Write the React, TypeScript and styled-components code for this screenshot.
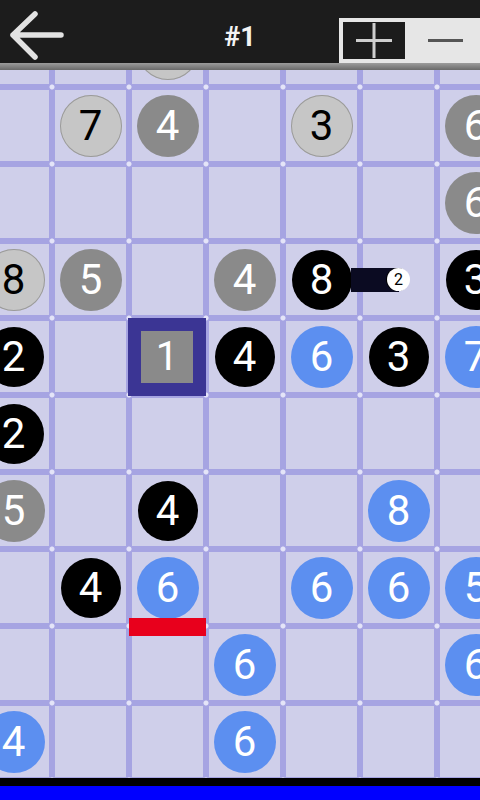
import styled, { createGlobalStyle } from "styled-components";

type Kind = "light" | "gray" | "black" | "blue";

const colors = {
  header: "#1c1c1c",
  cell: "#cfcfea",
  line: "#a6a4e2",
  dot: "#e4e4f8",
  light: "#c6c6c6",
  gray: "#8a8a8a",
  black: "#000000",
  blue: "#5c8ff0",
  selected: "#3b3594",
  marker: "#e8001c",
};

const GlobalStyle = createGlobalStyle`
  html, body {
    margin: 0;
    padding: 0;
    background: #000;
  }
  body {
    font-family: Roboto, "Noto Sans", sans-serif;
    overflow: hidden;
  }
`;

const Screen = styled.div`
  width: 480px;
  height: 800px;
  display: flex;
  flex-direction: column;
  overflow: hidden;
`;

const Header = styled.header`
  height: 63px;
  flex-shrink: 0;
  background: ${colors.header};
  display: grid;
  grid-template-columns: 1fr auto 1fr;
  align-items: center;
`;

const BackButton = styled.button`
  justify-self: start;
  align-self: stretch;
  background: none;
  border: 0;
  padding: 0;
  display: flex;
`;

const Title = styled.h1`
  margin: 0;
  padding-top: 11px;
  font-size: 27px;
  line-height: 1;
  font-weight: 700;
  color: #f4f4f4;
`;

const ZoomControl = styled.div`
  justify-self: end;
  align-self: end;
  height: 45px;
  box-sizing: border-box;
  width: 141px;
  padding: 4px 0 4px 4px;
  background: #e6e6e6;
  display: flex;
`;

const PlusButton = styled.div`
  width: 62px;
  background: ${colors.header};
  display: flex;
  align-items: center;
  justify-content: center;
`;

const MinusButton = styled.div`
  flex: 1;
  display: flex;
  align-items: center;
  justify-content: center;
  padding-left: 6px;

  &::before {
    content: "";
    width: 35px;
    height: 3px;
    background: #555;
  }
`;

const Separator = styled.div`
  height: 7px;
  flex-shrink: 0;
  background: linear-gradient(#9c9c9c, #6a6a6a);
`;

const BoardView = styled.main`
  flex: 1;
  overflow: hidden;
  background: ${colors.cell};
`;

const BoardGrid = styled.div`
  display: grid;
  grid-template-columns: repeat(7, 71px);
  grid-auto-rows: 71px;
  gap: 6px;
  width: max-content;
  padding: 0 6px 6px 0;
  margin: -57px 0 0 -22px;
  background-color: ${colors.line};
  background-image: radial-gradient(
    circle at 74px 74px,
    ${colors.dot} 0 2px,
    transparent 3px
  );
  background-size: 77px 77px;
`;

const Cell = styled.div`
  position: relative;
  background: ${colors.cell};
  display: flex;
  align-items: center;
  justify-content: center;
`;

const Token = styled.div<{ $kind: Kind }>`
  ${({ $kind }) => `
    width: ${$kind === "black" ? 60 : 62}px;
    height: ${$kind === "black" ? 60 : 62}px;
    background: ${colors[$kind]};
    color: ${$kind === "light" ? "#000" : "#fff"};
    box-shadow: ${$kind === "light" ? "inset 0 0 0 1px #9a9a9a" : "none"};
  `}
  border-radius: 50%;
  display: flex;
  align-items: center;
  justify-content: center;
  font-size: 42px;
  line-height: 1;
`;

const Selection = styled.div`
  position: absolute;
  inset: -3px -3px -4px -4px;
  border: 13px solid ${colors.selected};
  background: ${colors.gray};
  display: flex;
  align-items: center;
  justify-content: center;
  color: #fff;
  font-size: 40px;
  line-height: 1;
`;

const Marker = styled.div`
  position: absolute;
  z-index: 1;
  left: -3px;
  right: -3px;
  top: 66px;
  height: 18px;
  background: ${colors.marker};
`;

const Link = styled.div`
  position: absolute;
  left: -12px;
  top: 24px;
  width: 48px;
  height: 24px;
  background: #0b0b22;
`;

const LinkEnd = styled.div`
  position: absolute;
  z-index: 1;
  width: 23px;
  height: 23px;
  border-radius: 50%;
  background: #fff;
  box-shadow: -1px 0 0 #000;
  color: #000;
  font-size: 16px;
  line-height: 1;
  display: flex;
  align-items: center;
  justify-content: center;
`;

const Footer = styled.footer`
  height: 14px;
  flex-shrink: 0;
  border-top: 8px solid #000;
  background: #0000ff;
`;

const board: string[][] = [
  ["", "", "L", "", "", "", ""],
  ["", "L7", "G4", "", "L3", "", "G6"],
  ["", "", "", "", "", "", "G6"],
  ["L8", "G5", "", "G4", "B8", "K2", "B3"],
  ["B2", "", "S1", "B4", "U6", "B3", "U7"],
  ["B2", "", "", "", "", "", ""],
  ["G5", "", "B4", "", "", "U8", ""],
  ["", "B4", "U6R", "", "U6", "U6", "U5"],
  ["", "", "", "U6", "", "", "U6"],
  ["U4", "", "", "U6", "", "", ""],
];

const kinds: Record<string, Kind> = {
  L: "light",
  G: "gray",
  B: "black",
  U: "blue",
};

const renderCell = (code: string) => {
  if (!code) return null;
  const type = code[0];
  const value = code.slice(1).replace("R", "");

  if (type === "S") return <Selection>{value}</Selection>;

  if (type === "K")
    return (
      <>
        <Link />
        <LinkEnd>{value}</LinkEnd>
      </>
    );

  return (
    <>
      <Token $kind={kinds[type]}>{value}</Token>
      {code.endsWith("R") && <Marker />}
    </>
  );
};

const App: React.FC = () => {
  return (
    <Screen>
      <GlobalStyle />
      <Header>
        <BackButton aria-label="back">
          <svg width="70" height="63" viewBox="0 0 70 63">
            <path
              d="M35 14 L13 35 L35 57 M13 35 H61"
              fill="none"
              stroke="#e2e2e2"
              strokeWidth="5.5"
              strokeLinecap="round"
              strokeLinejoin="round"
            />
          </svg>
        </BackButton>
        <Title>#1</Title>
        <ZoomControl>
          <PlusButton>
            <svg width="38" height="37" viewBox="0 0 38 37">
              <path
                d="M1 18.5 H37 M19 1 V36"
                stroke="#cfcfcf"
                strokeWidth="3"
              />
            </svg>
          </PlusButton>
          <MinusButton />
        </ZoomControl>
      </Header>
      <Separator />
      <BoardView>
        <BoardGrid>
          {board.map((row, r) =>
            row.map((code, c) => (
              <Cell key={`cell_${r}_${c}`}>{renderCell(code)}</Cell>
            ))
          )}
        </BoardGrid>
      </BoardView>
      <Footer />
    </Screen>
  );
};

export default App;
